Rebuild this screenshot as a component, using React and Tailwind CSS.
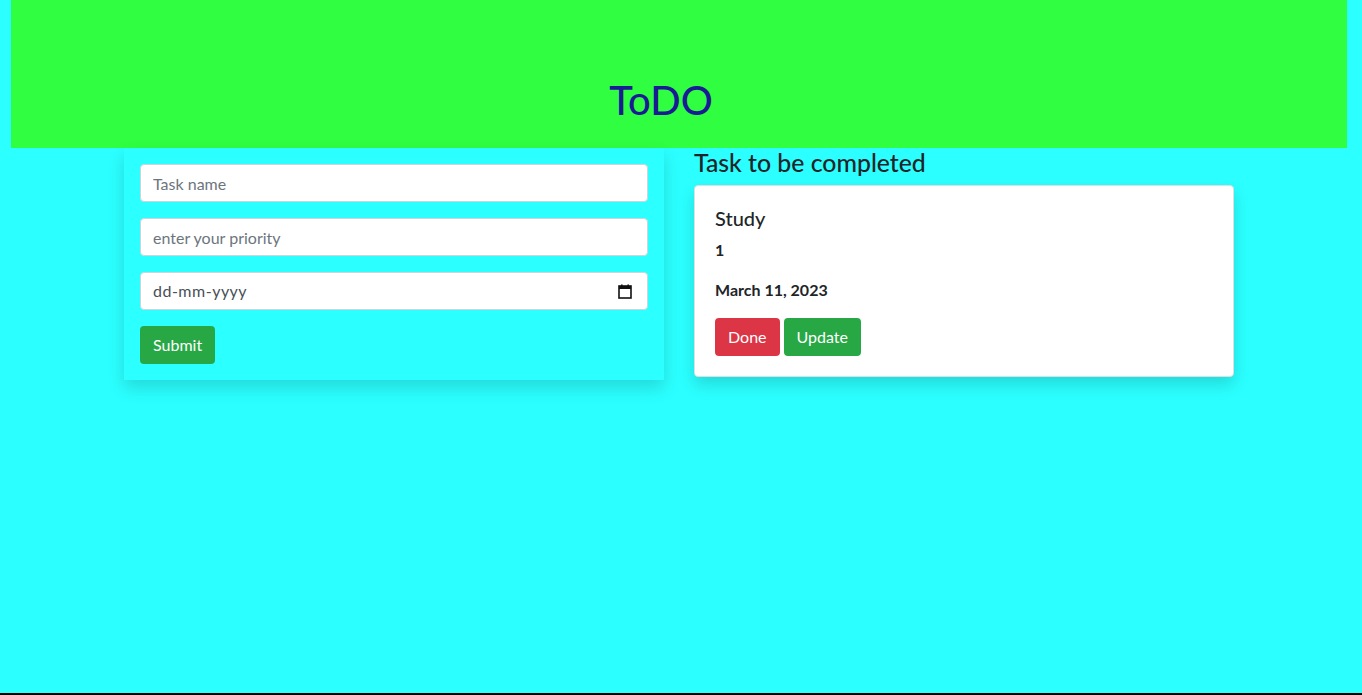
import React, { useState } from "react";

const TaskForm = () => {
  const [task, setTask] = useState({ name: "", priority: "" });

  const handleChange = (evt) => {
    setTask((task) => ({ ...task, [evt.target.name]: evt.target.value }));
  };

  return (
    <form
      className="flex flex-col gap-4 p-4 shadow-[0_8px_16px_rgba(0,0,0,0.15)]"
      onSubmit={(evt) => evt.preventDefault()}
    >
      <input
        name="name"
        type="text"
        placeholder="Task name"
        value={task.name}
        onChange={handleChange}
        className="h-[38px] w-full rounded border border-[#ced4da] bg-white px-3 text-base text-[#495057] placeholder:text-[#6c757d] outline-none"
      />
      <input
        name="priority"
        type="text"
        placeholder="enter your priority"
        value={task.priority}
        onChange={handleChange}
        className="h-[38px] w-full rounded border border-[#ced4da] bg-white px-3 text-base text-[#495057] placeholder:text-[#6c757d] outline-none"
      />
      <div className="flex h-[38px] w-full items-center justify-between rounded border border-[#ced4da] bg-white pl-3 pr-[15px] text-base text-[#495057]">
        <span className="tracking-[0.5px]">dd-mm-yyyy</span>
        <svg width="14" height="15" viewBox="0 0 14 15">
          <rect x="1" y="2" width="12" height="12" fill="none" stroke="#111" strokeWidth="1.6" />
          <rect x="1" y="2" width="12" height="3" fill="#111" />
          <rect x="3" y="0.5" width="1.6" height="2.5" fill="#111" />
          <rect x="9.4" y="0.5" width="1.6" height="2.5" fill="#111" />
        </svg>
      </div>
      <div>
        <button
          type="submit"
          className="h-[38px] rounded bg-[#28a745] px-[13px] text-base text-white"
        >
          Submit
        </button>
      </div>
    </form>
  );
};

const TaskCard = ({ title, priority, date }) => (
  <div className="rounded border border-[#dfdfdf] bg-white px-5 py-5 shadow-[0_8px_16px_rgba(0,0,0,0.15)]">
    <h5 className="mb-2 text-[20px] leading-[24px] font-medium">{title}</h5>
    <p className="mb-4 leading-6 font-bold">{priority}</p>
    <p className="mb-4 leading-6 font-bold">{date}</p>
    <div className="flex gap-1">
      <button className="h-[38px] rounded bg-[#dc3545] px-[13px] text-base text-white">
        Done
      </button>
      <button className="h-[38px] rounded bg-[#28a745] px-[13px] text-base text-white">
        Update
      </button>
    </div>
  </div>
);

export default function App() {
  return (
    <div
      className="h-[695px] bg-black text-[#212529]"
      style={{ fontFamily: "Lato, 'Noto Sans', sans-serif" }}
    >
      <div className="h-[693px] bg-[#2bffff] pl-[11px] pr-[15px]">
        <header className="flex h-[148px] items-end justify-center bg-[#2fff40] pb-6 pr-[36px]">
          <h1 className="text-[40px] leading-[48px] font-medium text-[#1a1a95]">
            ToDO
          </h1>
        </header>
        <main className="mx-auto grid w-[1110px] grid-cols-2 gap-[30px]">
          <TaskForm />
          <section>
            <h4 className="mb-2 text-[24.8px] leading-[29px] font-medium">
              Task to be completed
            </h4>
            <TaskCard title="Study" priority="1" date="March 11, 2023" />
          </section>
        </main>
      </div>
    </div>
  );
}
